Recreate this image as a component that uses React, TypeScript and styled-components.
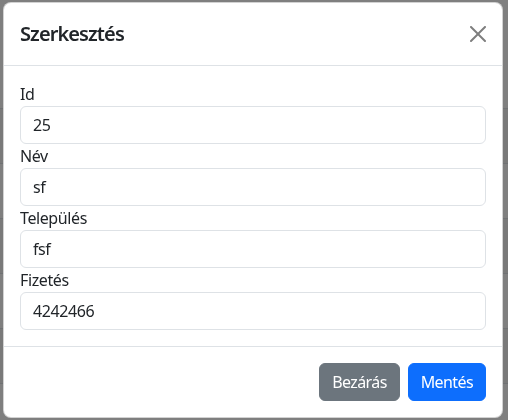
import { createGlobalStyle, styled } from "styled-components";

const GlobalStyle = createGlobalStyle`
  html, body {
    margin: 0;
    background: #fff;
  }
  body {
    font-family: "Noto Sans", "Liberation Sans", sans-serif;
    letter-spacing: -0.4px;
    color: #212529;
  }
  * {
    box-sizing: border-box;
  }
`;

const fields = [
  { label: "Id", value: "25" },
  { label: "Név", value: "sf" },
  { label: "Település", value: "fsf" },
  { label: "Fizetés", value: "4242466" },
];

const Page = styled.div`
  height: 420px;
  padding-top: 108px;
  overflow: hidden;
`;

const Table = styled.div`
  display: flex;
  flex-direction: column;
`;

const Row = styled.div<{ $striped: boolean }>`
  height: 55px;
  border-top: 1px solid #dee2e6;
  background: ${(p) => (p.$striped ? "#f2f2f2" : "#fff")};
`;

const Backdrop = styled.div`
  position: fixed;
  inset: 0;
  background: rgba(0, 0, 0, 0.5);
`;

const Modal = styled.div`
  position: fixed;
  top: 2px;
  left: 3px;
  width: 500px;
  background: #fff;
  border: 1px solid rgba(0, 0, 0, 0.175);
  border-radius: 8px;
  display: flex;
  flex-direction: column;
`;

const Header = styled.div`
  display: flex;
  align-items: center;
  justify-content: space-between;
  padding: 16px;
  border-bottom: 1px solid #dee2e6;
`;

const Title = styled.h5`
  margin: 0;
  font-size: 20px;
  font-weight: 600;
  line-height: 1.5;
  letter-spacing: -0.9px;
`;

const CloseButton = styled.button`
  width: 32px;
  height: 32px;
  padding: 8px;
  margin: -8px -8px -8px auto;
  border: 0;
  background: transparent;
  opacity: 0.5;
  display: flex;
  align-items: center;
  justify-content: center;
  color: #000;
`;

const Body = styled.div`
  padding: 16px;
  display: flex;
  flex-direction: column;
`;

const Label = styled.label`
  font-size: 16px;
  line-height: 24px;
`;

const Input = styled.input`
  width: 100%;
  height: 38px;
  padding: 6px 12px;
  font: inherit;
  font-size: 16px;
  line-height: 1.5;
  letter-spacing: -0.4px;
  color: #212529;
  background: #fff;
  border: 1px solid #dee2e6;
  border-radius: 6px;
  outline: none;
`;

const Footer = styled.div`
  display: flex;
  justify-content: flex-end;
  align-items: center;
  padding: 12px;
  border-top: 1px solid #dee2e6;
`;

const Button = styled.button<{ $variant: "secondary" | "primary" }>`
  margin: 4px;
  height: 38px;
  padding: 6px 12px;
  font: inherit;
  font-size: 16px;
  line-height: 1.5;
  letter-spacing: -0.6px;
  color: #fff;
  border: 1px solid ${(p) => (p.$variant === "primary" ? "#0d6efd" : "#6c757d")};
  background: ${(p) => (p.$variant === "primary" ? "#0d6efd" : "#6c757d")};
  border-radius: 6px;
`;

export default function App() {
  return (
    <>
      <GlobalStyle />
      <Page>
        <Table>
          {[0, 1, 2, 3, 4, 5].map((i) => (
            <Row key={i} $striped={i % 2 === 0} />
          ))}
        </Table>
      </Page>
      <Backdrop />
      <Modal>
        <Header>
          <Title>Szerkesztés</Title>
          <CloseButton aria-label="Close">
            <svg width="16" height="16" viewBox="0 0 16 16" fill="currentColor">
              <path d="M.293.293a1 1 0 0 1 1.414 0L8 6.586 14.293.293a1 1 0 1 1 1.414 1.414L9.414 8l6.293 6.293a1 1 0 0 1-1.414 1.414L8 9.414l-6.293 6.293a1 1 0 0 1-1.414-1.414L6.586 8 .293 1.707a1 1 0 0 1 0-1.414" />
            </svg>
          </CloseButton>
        </Header>
        <Body>
          {fields.map((f) => (
            <div key={f.label}>
              <Label>{f.label}</Label>
              <Input defaultValue={f.value} readOnly />
            </div>
          ))}
        </Body>
        <Footer>
          <Button $variant="secondary">Bezárás</Button>
          <Button $variant="primary">Mentés</Button>
        </Footer>
      </Modal>
    </>
  );
}
